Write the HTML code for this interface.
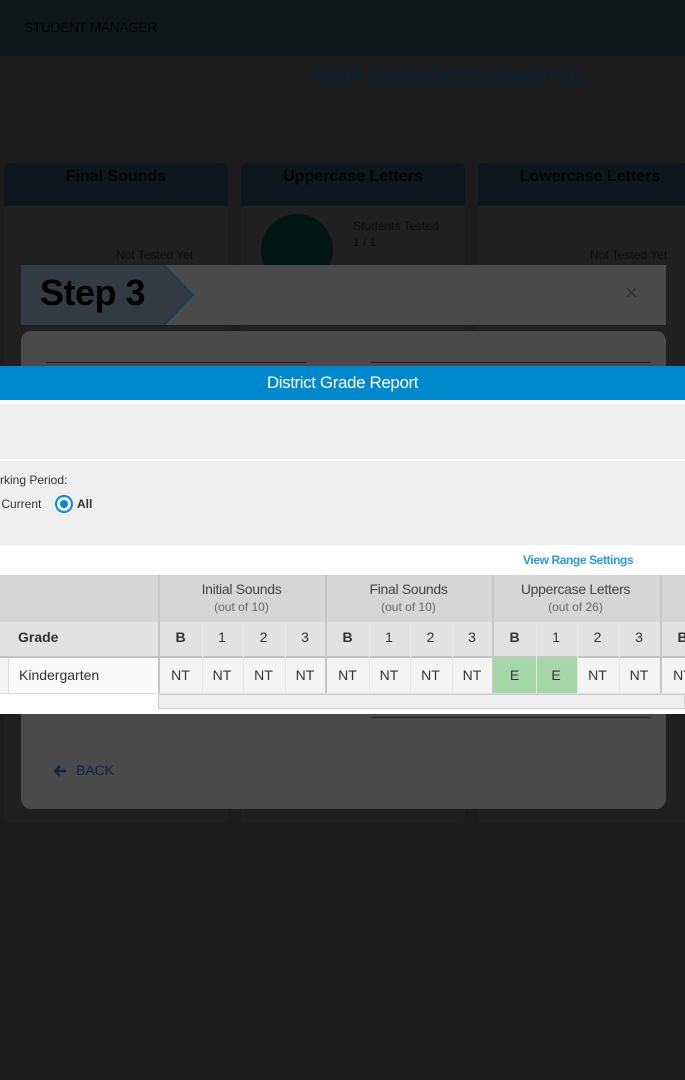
<!DOCTYPE html><html><head><style>
*{box-sizing:border-box;margin:0;padding:0}
body{width:685px;height:1080px;background:#1c1c1c;font-family:"Liberation Sans",sans-serif;position:relative;overflow:hidden}
.a{position:absolute}
.c{text-align:center}
</style></head><body>
<div class="a" style="left:0;top:0;width:685px;height:56px;background:#101719"></div>
<div class="a" style="left:24px;top:19px;font-size:14px;color:#030506;letter-spacing:-0.5px">STUDENT MANAGER</div>
<div class="a" style="left:0;top:56px;width:685px;height:80px;background:#1d1d1d"></div>
<div class="a" style="left:311px;top:64px;font-size:20px;color:#072235;letter-spacing:-0.8px">Grade Scales District 5 Summary</div>
<div class="a" style="left:4px;top:163px;width:224px;height:660px;background:#202020;border-radius:6px"></div>
<div class="a" style="left:241px;top:163px;width:224px;height:660px;background:#202020;border-radius:6px"></div>
<div class="a" style="left:478px;top:163px;width:210px;height:660px;background:#202020;border-radius:6px"></div>
<div class="a" style="left:4px;top:163px;width:224px;height:43px;background:#0e171c;border-radius:6px 6px 0 0"></div>
<div class="a" style="left:241px;top:163px;width:224px;height:43px;background:#0e171c;border-radius:6px 6px 0 0"></div>
<div class="a" style="left:478px;top:163px;width:210px;height:43px;background:#0e171c;border-radius:6px 6px 0 0"></div>
<div class="a c" style="left:4px;top:168px;width:224px;font-size:16px;font-weight:bold;color:#050607">Final Sounds</div>
<div class="a c" style="left:241px;top:168px;width:224px;font-size:16px;font-weight:bold;color:#050607">Uppercase Letters</div>
<div class="a c" style="left:478px;top:168px;width:224px;font-size:16px;font-weight:bold;color:#050607">Lowercase Letters</div>
<div class="a" style="left:261px;top:214px;width:72px;height:72px;border-radius:50%;background:#011611"></div>
<div class="a" style="left:353px;top:218px;font-size:12px;color:#0d0d0d;line-height:16px">Students Tested<br>1 / 1</div>
<div class="a" style="left:116px;top:248px;font-size:12px;color:#0d0d0d">Not Tested Yet</div>
<div class="a" style="left:590px;top:248px;font-size:12px;color:#0d0d0d">Not Tested Yet</div>
<div class="a" style="left:21px;top:265px;width:645px;height:60px;background:#4a4a4a"></div>
<svg class="a" style="left:21px;top:265px" width="175" height="60"><polygon points="0,0 143,0 172,30 143,60 0,60" fill="#333b42"/><polyline points="143,0 172,30 143,60" fill="none" stroke="#0d3b5a" stroke-width="1.5"/></svg>
<div class="a" style="left:40px;top:272px;font-size:36px;font-weight:bold;color:#000;letter-spacing:-0.5px">Step 3</div>
<div class="a" style="left:625px;top:280px;font-size:22px;color:#333">×</div>
<div class="a" style="left:21px;top:331px;width:645px;height:478px;background:#4a4a4a;border-radius:10px"></div>
<div class="a" style="left:46px;top:362px;width:260px;height:1px;background:#222"></div>
<div class="a" style="left:371px;top:362px;width:280px;height:1px;background:#222"></div>
<div class="a" style="left:371px;top:717px;width:280px;height:1px;background:#222"></div>
<svg class="a" style="left:53px;top:764px" width="14" height="14"><path d="M7 2 L2 7 L7 12 M2 7 H13" stroke="#082a44" stroke-width="2.5" fill="none"/></svg>
<div class="a" style="left:76px;top:762px;font-size:14px;color:#082a44">BACK</div>
<div class="a" style="left:0;top:366px;width:685px;height:348px;background:#fff"></div>
<div class="a c" style="left:0;top:366px;width:685px;height:34px;background:#0088cc;color:#fff;font-size:17px;line-height:34px;letter-spacing:-0.4px">District Grade Report</div>
<div class="a" style="left:0;top:404px;width:685px;height:55px;background:#efefef"></div>
<div class="a" style="left:0;top:461px;width:685px;height:84px;background:#efefef"></div>
<div class="a" style="left:0;top:473px;font-size:12px;color:#333">rking Period:</div>
<div class="a" style="left:-6px;top:497px;font-size:12px;color:#333">) Current</div>
<div class="a" style="left:55px;top:495px;width:18px;height:18px;border:2px solid #0088cc;border-radius:50%;background:#fff"><div style="margin:3px;width:8px;height:8px;border-radius:50%;background:#0088cc"></div></div>
<div class="a" style="left:77px;top:497px;font-size:12px;font-weight:bold;color:#333">All</div>
<div class="a" style="left:523px;top:553px;font-size:12px;font-weight:bold;color:#2a9ad8;letter-spacing:-0.4px">View Range Settings</div>
<div class="a" style="left:0;top:575px;width:685px;height:47px;background:#d6d6d6"></div>
<div class="a" style="left:0;top:622px;width:685px;height:35px;background:#e2e2e2"></div>
<div class="a" style="left:0;top:656px;width:685px;height:2px;background:#c4c4c4"></div>
<div class="a" style="left:0;top:658px;width:685px;height:35px;background:#f4f4f4"></div>
<div class="a" style="left:8px;top:658px;width:150px;height:35px;background:#fafafa;border-left:1px solid #ddd"></div>
<div class="a" style="left:0;top:693px;width:685px;height:1px;background:#ddd"></div>
<div class="a" style="left:158px;top:694px;width:527px;height:15px;background:#eee;border:1px solid #ccc"></div>
<div class="a" style="left:18px;top:629px;font-size:14px;font-weight:bold;color:#333">Grade</div>
<div class="a" style="left:19px;top:667px;font-size:14px;color:#333">Kindergarten</div>
<div class="a" style="left:493px;top:658px;width:84px;height:35px;background:#a5d6a7"></div>
<div id="g"></div>
<script>
var h='';var groups=[["Initial Sounds","(out of 10)"],["Final Sounds","(out of 10)"],["Uppercase Letters","(out of 26)"],["",""]];
var xs=[158,325,492,660];
var vals=["NT","NT","NT","NT","NT","NT","NT","NT","E","E","NT","NT","NT"];
var k=0;
for(var g=0;g<4;g++){var x=xs[g];
h+='<div class="a" style="left:'+x+'px;top:575px;width:2px;height:118px;background:#c4c4c4"></div>';
h+='<div class="a c" style="left:'+x+'px;top:581px;width:167px;font-size:14px;color:#444;letter-spacing:-0.3px">'+groups[g][0]+'</div>';
h+='<div class="a c" style="left:'+x+'px;top:600px;width:167px;font-size:12px;color:#666">'+groups[g][1]+'</div>';
var labs=["B","1","2","3"];
for(var i=0;i<4;i++){var cx=x+2+i*41.5;if(cx>685)break;
if(i>0)h+='<div class="a" style="left:'+cx+'px;top:622px;width:1px;height:71px;background:#e8e8e8"></div>';
h+='<div class="a c" style="left:'+cx+'px;top:629px;width:41px;font-size:14px;color:#333;'+(i==0?'font-weight:bold':'')+'">'+labs[i]+'</div>';
if(k<vals.length)h+='<div class="a c" style="left:'+cx+'px;top:667px;width:41px;font-size:14px;color:#333">'+vals[k]+'</div>';k++;}
}
document.getElementById('g').innerHTML=h;
</script>
</body></html>
